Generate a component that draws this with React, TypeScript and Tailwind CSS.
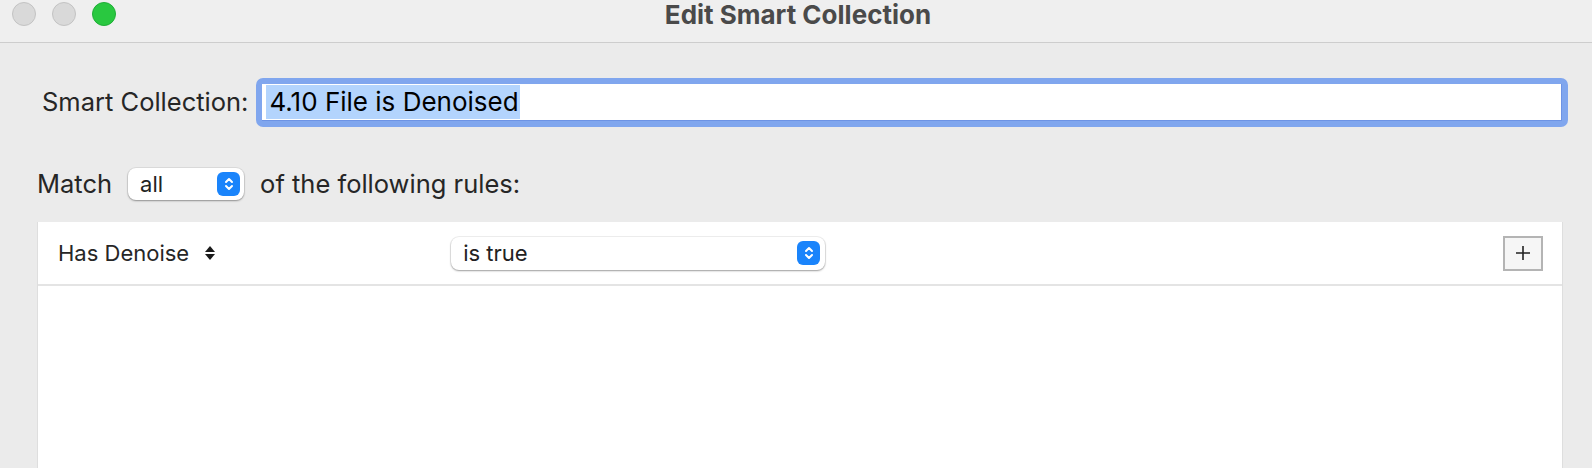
import React from 'react';

const font = { fontFamily: 'Inter, "Liberation Sans", sans-serif' };

const Stepper = () => (
  <span className="flex h-[24px] w-[23px] items-center justify-center rounded-[6px] bg-[#1a84fb]">
    <svg width="10" height="16" viewBox="0 0 10 16" fill="none" stroke="white" strokeWidth="2" strokeLinecap="round" strokeLinejoin="round">
      <path d="M2 6 L5 3 L8 6" />
      <path d="M2 10 L5 13 L8 10" />
    </svg>
  </span>
);

const PopUp = ({ label, className }: { label: string; className: string }) => (
  <div
    className={
      'flex items-center justify-between rounded-[8px] bg-white pl-[12px] pr-[4px] shadow-[0_1px_2px_rgba(0,0,0,0.35),0_0_0_1px_rgba(0,0,0,0.06)] ' +
      className
    }
  >
    <span className="text-[22px] leading-none text-[#222]">{label}</span>
    <Stepper />
  </div>
);

export default function App() {
  return (
    <div className="flex h-[468px] w-[1592px] flex-col overflow-hidden bg-[#ebebeb]" style={font}>
      {/* title bar */}
      <div className="relative flex h-[43px] shrink-0 items-start border-b border-[#cdcdcd] bg-[#efefef] pl-[12px] pt-[2px]">
        <div className="flex gap-[16px]">
          <span className="h-[24px] w-[24px] rounded-full border border-[#c3c3c3] bg-[#d9d9d9]" />
          <span className="h-[24px] w-[24px] rounded-full border border-[#c3c3c3] bg-[#d9d9d9]" />
          <span className="h-[24px] w-[24px] rounded-full border border-[#1fae37] bg-[#29c840]" />
        </div>
        <div className="absolute left-0 right-0 top-0 flex h-[32px] justify-center">
          <span className="pl-[4px] text-[26px] font-bold leading-[30px] text-[#4a4a4a]">Edit Smart Collection</span>
        </div>
      </div>

      {/* name field */}
      <div className="mt-[35px] flex h-[49px] items-center pl-[42px] pr-[24px]">
        <span className="mr-[8px] text-[25.5px] text-[#262626]">Smart Collection:</span>
        <div className="flex-1 rounded-[7px] bg-[#80a6ee] p-[6px]">
          <div className="flex h-[37px] items-center border-b border-r border-[#6d93e4] bg-white pl-[4px]">
            <span className="bg-[#b3d4fd] pl-[3px] pr-[1px] text-[26px] leading-[34px] text-black">4.10 File is Denoised</span>
          </div>
        </div>
      </div>

      {/* match row */}
      <div className="mt-[41px] flex h-[32px] items-center pl-[37px]">
        <span className="text-[25.5px] text-[#262626]">Match</span>
        <PopUp label="all" className="mx-[16px] h-[32px] w-[116px]" />
        <span className="text-[25.5px] text-[#262626]">of the following rules:</span>
      </div>

      {/* rules panel */}
      <div className="ml-[37px] mr-[29px] mt-[22px] flex-1 border-x border-[#dedede] bg-white">
        <div className="flex h-[64px] items-center border-b-2 border-[#e4e4e4] pl-[20px] pr-[19px]">
          <span className="text-[22px] text-[#262626]">Has Denoise</span>
          <svg className="ml-[15px]" width="12" height="16" viewBox="0 0 12 16" fill="#1a1a1a">
            <path d="M6 1 L11 7 L1 7 Z" />
            <path d="M1 9 L11 9 L6 15 Z" />
          </svg>
          <PopUp label="is true" className="ml-[235px] h-[33px] w-[374px] pr-[5px]" />
          <div className="flex-1" />
          <div className="flex h-[35px] w-[40px] items-center justify-center border-2 border-[#b4b4b4] bg-[#f6f6f6]">
            <svg width="14" height="14" viewBox="0 0 14 14" stroke="#222" strokeWidth="1.6">
              <path d="M7 0 V14 M0 7 H14" />
            </svg>
          </div>
        </div>
      </div>
    </div>
  );
}
